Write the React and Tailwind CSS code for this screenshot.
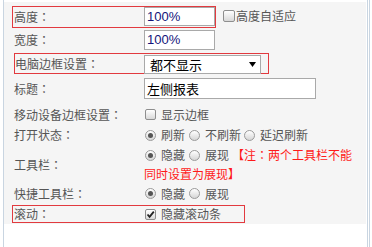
import React from 'react';

// full-width colon, centred in its box like the original UI font
const C = () => <span className="font-['Noto_Sans_CJK_TC',sans-serif]">：</span>;

const Checkbox = ({ checked, size = 'w-[11px] h-[11px]' }) => (
  <span className={`${size} shrink-0 rounded-[2px] border border-[#8e8e8e] bg-linear-to-b from-white to-[#d9d9d9] flex items-center justify-center`}>
    {checked && (
      <svg width="9" height="9" viewBox="0 0 9 9">
        <path d="M1.5 4.5 L3.6 6.8 L7.8 1.6" stroke="#222" strokeWidth="1.8" fill="none" />
      </svg>
    )}
  </span>
);

const Radio = ({ checked }) => (
  <span className="w-[11px] h-[11px] shrink-0 rounded-full border border-[#9a9a9a] bg-linear-to-b from-white to-[#d6d6d6] flex items-center justify-center">
    {checked && <span className="w-[5px] h-[5px] rounded-full bg-[#555]" />}
  </span>
);

const Option = ({ checked, label, className = '' }) => (
  <span className={`inline-flex items-center ${className}`}>
    <span className="ml-[1px]"><Radio checked={checked} /></span>
    <span className="ml-[5px]">{label}</span>
  </span>
);

const Label = ({ children, w = 'w-[130px]' }) => (
  <div className={`${w} shrink-0 h-full flex items-center`}>{children}</div>
);

export default function App() {
  return (
    <div className="flex h-[247px] w-[372px] bg-white text-[12px] leading-[16px] text-[#555] font-['Noto_Sans_CJK_SC',sans-serif] overflow-hidden">
      <div className="w-[3px]" />
      <div className="w-px bg-[#c9d5e1]" />
      <div className="w-[362px] pt-[2px]">
        <div className="h-[222px] bg-[#f5f5f5] pt-[4px]">
          {/* 高度 */}
          <div className="flex items-center">
            <div className="ml-[8px] w-[204px] h-[22px] border border-[#e23a3f] flex items-start">
              <div className="w-[131px] h-full pl-[1px] flex items-center">高度<C /></div>
              <div className="w-[71px] h-[19px] border border-[#a9a9a9] bg-white flex items-center px-[2px] text-[13px] text-[#14147a] font-['Liberation_Sans',sans-serif]">100%</div>
            </div>
            <div className="ml-[7px] flex items-center -mt-[3px]">
              <Checkbox size="w-[12px] h-[12px]" />
              <span className="ml-[1px]">高度自适应</span>
            </div>
          </div>

          {/* 宽度 */}
          <div className="mt-[2px] h-[20px] pl-[10px] flex items-center">
            <Label>宽度<C /></Label>
            <div className="w-[71px] h-[20px] border border-[#a9a9a9] bg-white flex items-center px-[2px] text-[13px] text-[#14147a] font-['Liberation_Sans',sans-serif]">100%</div>
          </div>

          {/* 电脑边框设置 */}
          <div className="mt-[3px] ml-[10px] w-[255px] h-[21px] border border-[#e23a3f] flex items-start">
            <div className="w-[129px] h-full flex items-center">电脑边框设置<C /></div>
            <div className="mt-[1px] w-[117px] h-[19px] border border-[#a9a9a9] bg-white flex items-center justify-between pl-[5px] pr-[4px] text-[13px] text-black">
              <span>都不显示</span>
              <svg width="7" height="5" viewBox="0 0 7 5"><polygon points="0,0 7,0 3.5,5" fill="#000" /></svg>
            </div>
          </div>

          {/* 标题 */}
          <div className="mt-[4px] h-[21px] pl-[10px] flex items-center">
            <Label>标题<C /></Label>
            <div className="w-[172px] h-[21px] border border-[#a9a9a9] bg-white flex items-center px-[2px] text-[13px] text-black">左侧报表</div>
          </div>

          {/* 移动设备边框设置 */}
          <div className="mt-[5px] h-[21px] pl-[10px] flex items-center">
            <Label>移动设备边框设置<C /></Label>
            <span className="ml-[1px]"><Checkbox /></span>
            <span className="ml-[5px]">显示边框</span>
          </div>

          {/* 打开状态 */}
          <div className="h-[20px] pl-[10px] flex items-center">
            <Label>打开状态<C /></Label>
            <Option checked label="刷新" />
            <Option label="不刷新" className="ml-[3px]" />
            <Option label="延迟刷新" className="ml-[2px]" />
          </div>

          {/* 工具栏 */}
          <div className="h-[39px] pl-[10px] flex items-center">
            <Label>工具栏<C /></Label>
            <div className="w-[210px] flex flex-col">
              <div className="h-[19px] flex items-center">
                <Option checked label="隐藏" />
                <Option label="展现" className="ml-[3px]" />
                <span className="ml-[3px] text-[#ff1a1a]">【注<C />两个工具栏不能</span>
              </div>
              <div className="h-[19px] flex items-center text-[#ff1a1a]">同时设置为展现】</div>
            </div>
          </div>

          {/* 快捷工具栏 */}
          <div className="h-[19px] pl-[10px] flex items-center">
            <Label>快捷工具栏<C /></Label>
            <Option checked label="隐藏" />
            <Option label="展现" className="ml-[3px]" />
          </div>

          {/* 滚动 */}
          <div className="mt-[2px] ml-[8px] w-[233px] h-[18px] border border-[#e23a3f] flex items-center">
            <div className="w-[131px] h-full pl-[1px] flex items-center">滚动<C /></div>
            <span className="ml-[1px]"><Checkbox checked /></span>
            <span className="ml-[5px]">隐藏滚动条</span>
          </div>
        </div>
      </div>
      <div className="w-px" />
      <div className="w-px bg-[#c9d5e1]" />
      <div className="w-px" />
      <div className="w-px bg-[#c9d5e1]" />
    </div>
  );
}
